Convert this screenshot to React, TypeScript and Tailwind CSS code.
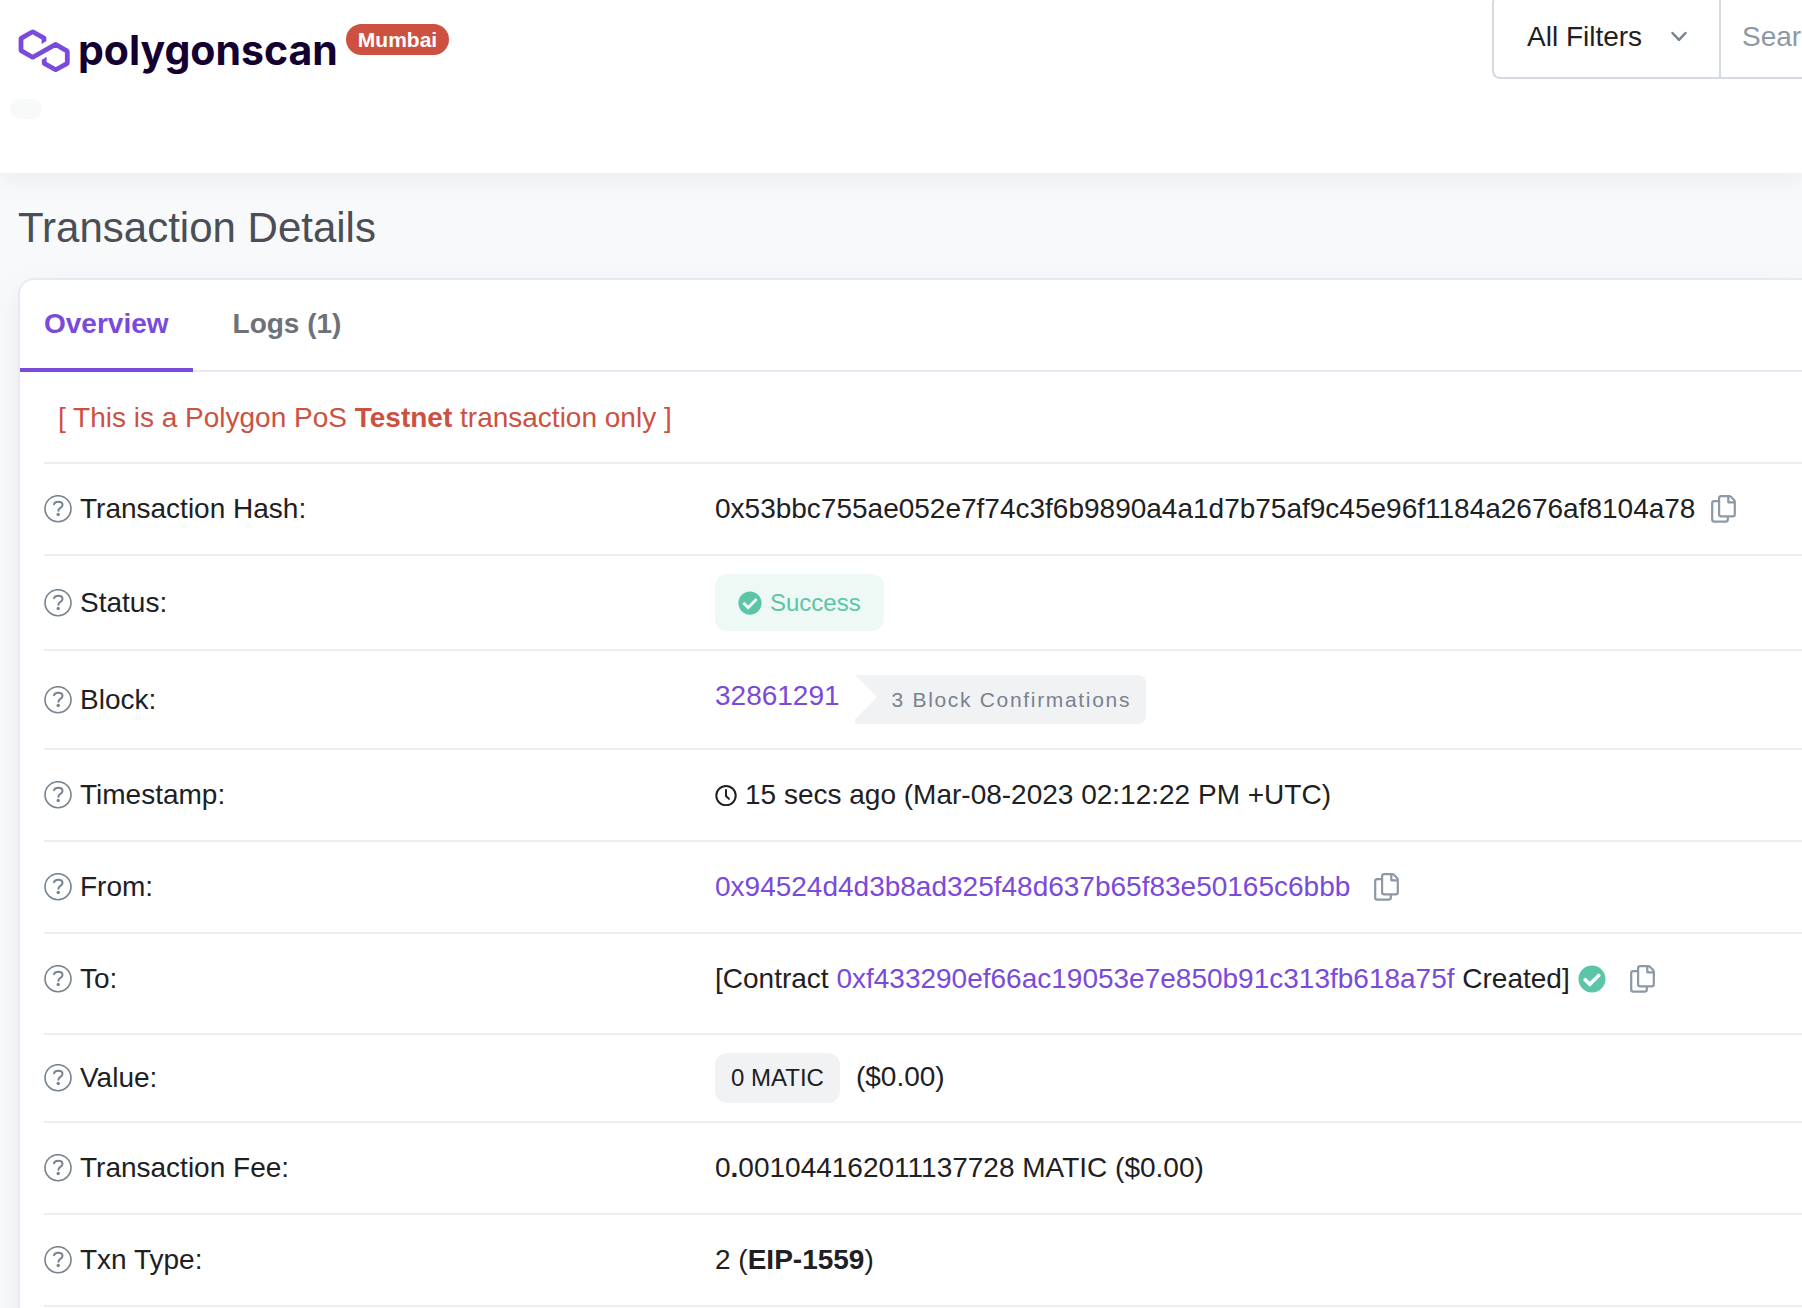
import { type ReactNode, useState } from "react";
import { FaCheckCircle } from "react-icons/fa";

type DetailRowProps = {
  label: string;
  children: ReactNode;
  className?: string;
};

function LogoMark() {
  return (
    <svg viewBox="0 0 52 44" className="h-[44px] w-[52px] shrink-0" fill="none" aria-hidden="true">
      <path
        d="M26 13V10.2L15.2 4Q14.7 3.7 14.2 4L3.5 10.1Q3 10.4 3 11V22Q3 22.6 3.5 22.9L14.2 29Q14.7 29.3 15.2 29L37.2 16.7Q37.7 16.4 38.2 16.7L48.8 22.9Q49.3 23.2 49.3 23.8V34.7Q49.3 35.3 48.8 35.6L38.2 41.5Q37.7 41.8 37.2 41.5L26.2 35.3V31.8"
        stroke="#7a4adb"
        strokeWidth="4.8"
        strokeLinejoin="round"
      />
      <path d="M23.6 12.9H28.4L23.6 16.1ZM23.8 31.9V32L28.6 28.8V31.9Z" fill="#7a4adb" />
    </svg>
  );
}

function HelpIcon() {
  return (
    <svg viewBox="0 0 28 28" className="h-7 w-7 shrink-0" fill="none" stroke="#77838f" aria-hidden="true">
      <circle cx="14" cy="13.7" r="13" strokeWidth="1.6" />
      <path d="M10 9.2C10.6 7.4 12 6.8 14.2 6.8c2.6 0 4.3 1.1 4.3 3.2 0 2.9-4.1 2.9-4.1 5.7" strokeWidth="2" strokeLinecap="round" />
      <circle cx="14.2" cy="19.5" r="1.7" fill="#77838f" stroke="none" />
    </svg>
  );
}

function CopyButton() {
  return (
    <button type="button" aria-label="Copy to clipboard" className="h-7 w-[25px] shrink-0 cursor-pointer">
      <svg viewBox="0 0 25 28" className="h-7 w-[25px]" fill="none" stroke="#8c98a4" strokeWidth="2.2" strokeLinejoin="round">
        <path d="M8 6.2H3.3Q1.2 6.2 1.2 8.3V24.6Q1.2 26.7 3.3 26.7H14.7Q16.8 26.7 16.8 24.6V21.8" />
        <path d="M10.2 1.1H18.2Q19.2 1.1 19.9 1.8L23.1 5Q23.8 5.7 23.8 6.7V19.3Q23.8 21.4 21.7 21.4H10.2Q8.1 21.4 8.1 19.3V3.2Q8.1 1.1 10.2 1.1Z" />
        <path d="M17.3 1.4V7.3H23.4" />
      </svg>
    </button>
  );
}

function ClockIcon() {
  return (
    <svg viewBox="0 0 22 22" className="h-[22px] w-[22px] shrink-0" fill="none" stroke="#1e2022" strokeWidth="2" strokeLinecap="round" aria-hidden="true">
      <circle cx="11" cy="11.6" r="9.7" />
      <path d="M11 6.1V12L14 14.9" />
    </svg>
  );
}

function DetailRow({ label, children, className = "items-center py-6" }: DetailRowProps) {
  return (
    <div className={`flex border-b-2 border-[#ececf3] ${className}`}>
      <dt className="flex w-[671px] shrink-0 items-center gap-2">
        <HelpIcon />
        {label}
      </dt>
      <dd className="min-w-0">{children}</dd>
    </div>
  );
}

export default function App() {
  const [tab, setTab] = useState("overview");

  const tabClass = (name: string) =>
    `cursor-pointer border-b-4 px-6 pt-[23px] pb-[23px] font-bold ${
      tab === name ? "border-[#7a4adb] text-[#7a4adb]" : "border-transparent text-[#6c7278]"
    }`;

  return (
    <div className="min-h-screen overflow-hidden bg-[#f8f9fb] font-['Liberation_Sans',Arial,sans-serif] text-[28px] leading-[42px] text-[#1e2022]">
      {/* HEADER */}
      <header className="relative h-[173px] bg-white shadow-[0_6px_24px_rgba(120,130,140,0.11)]">
        <div className="flex items-start justify-between">
          <a href="#" className="flex pt-6 pl-[18px]">
            <span className="flex items-center gap-2 pt-1">
              <LogoMark />
              <span className="font-['Inter',sans-serif] text-[41px] leading-[44px] font-bold text-[#130030]">polygonscan</span>
            </span>
            <span className="ml-2 h-[31px] rounded-full bg-[#cd5141] px-3 text-[21px] leading-[31px] font-bold text-white">Mumbai</span>
          </a>

          <form className="-mt-[5px] flex h-[84px] w-[310px] rounded-l-lg border-2 border-r-0 border-[#d5dae2]" onSubmit={(e) => e.preventDefault()}>
            <div className="relative w-[227px] shrink-0 border-r-2 border-[#d5dae2]">
              <select aria-label="Search filter" className="h-full w-full appearance-none bg-transparent pl-[33px] outline-none">
                <option>All Filters</option>
                <option>Addresses</option>
                <option>Tokens</option>
              </select>
              <svg viewBox="0 0 18 12" className="pointer-events-none absolute top-[34px] right-[31px] h-3 w-[18px]" fill="none" stroke="#77838f" strokeWidth="2.5" strokeLinecap="round" strokeLinejoin="round">
                <path d="M2.5 2L9 8.8L15.5 2" />
              </svg>
            </div>
            <input aria-label="Search" placeholder="Search" className="w-full min-w-0 pl-[21px] outline-none placeholder:text-[#8c98a4]" />
          </form>
        </div>
        <div className="mt-5 ml-[10px] h-5 w-8 rounded-full bg-[#f8fafa]" />
      </header>

      {/* TRANSACTION */}
      <main className="pt-[29px] pl-[18px]">
        <h1 className="text-[42px] leading-[52px] text-[#4a4f55]">Transaction Details</h1>

        <section className="mt-6 rounded-tl-2xl border-2 border-r-0 border-b-0 border-[#e7eaf3] bg-white pb-6 shadow-[0_12px_30px_rgba(120,130,140,0.12)]">
          <div role="tablist" className="flex gap-4 shadow-[inset_0_-2px_0_#e7eaf3]">
            <button type="button" role="tab" aria-selected={tab === "overview"} className={tabClass("overview")} onClick={() => setTab("overview")}>
              Overview
            </button>
            <button type="button" role="tab" aria-selected={tab === "logs"} className={tabClass("logs")} onClick={() => setTab("logs")}>
              Logs (1)
            </button>
          </div>

          <div className="pl-6">
            <p className="border-b-2 border-[#ececf3] pt-[25px] pb-[23px] pl-[14px] text-[#cd5141]">
              [ This is a Polygon PoS <strong>Testnet</strong> transaction only ]
            </p>

            <dl>
              <DetailRow label="Transaction Hash:">
                <div className="flex items-center gap-4">
                  0x53bbc755ae052e7f74c3f6b9890a4a1d7b75af9c45e96f1184a2676af8104a78
                  <CopyButton />
                </div>
              </DetailRow>

              <DetailRow label="Status:" className="items-center py-[18px]">
                <span className="flex h-[57px] items-center gap-2 rounded-xl bg-[#eef8f5] px-[23px] text-[24px] text-[#5cc5a7]">
                  <FaCheckCircle size={24} />
                  Success
                </span>
              </DetailRow>

              <DetailRow label="Block:">
                <div className="flex items-start gap-[15px]">
                  <a href="#" className="text-[#7a4adb]">32861291</a>
                  <span className="flex h-[49px] items-center rounded-r-lg bg-[#f1f2f4] pr-[15px] text-[21px] tracking-[0.08em] text-[#77838f]">
                    <span className="mr-[15px] h-[44px] self-start border-y-[22px] border-l-[22px] border-y-transparent border-l-white" />
                    3 Block Confirmations
                  </span>
                </div>
              </DetailRow>

              <DetailRow label="Timestamp:">
                <div className="flex items-center gap-2">
                  <ClockIcon />
                  15 secs ago (Mar-08-2023 02:12:22 PM +UTC)
                </div>
              </DetailRow>

              <DetailRow label="From:">
                <div className="flex items-center gap-6">
                  <a href="#" className="text-[#7a4adb]">0x94524d4d3b8ad325f48d637b65f83e50165c6bbb</a>
                  <CopyButton />
                </div>
              </DetailRow>

              <DetailRow label="To:" className="items-center pt-6 pb-[33px]">
                <div className="flex items-center gap-6">
                  <span className="flex items-center gap-2">
                    <span>
                      [Contract <a href="#" className="text-[#7a4adb]">0xf433290ef66ac19053e7e850b91c313fb618a75f</a> Created]
                    </span>
                    <FaCheckCircle size={28} color="#5cc5a7" />
                  </span>
                  <CopyButton />
                </div>
              </DetailRow>

              <DetailRow label="Value:" className="items-center py-[18px]">
                <div className="flex items-baseline gap-4">
                  <span className="rounded-xl bg-[#f1f2f4] px-4 text-[24px] leading-[50px]">0 MATIC</span>
                  ($0.00)
                </div>
              </DetailRow>

              <DetailRow label="Transaction Fee:">
                0<b>.</b>001044162011137728 MATIC ($0.00)
              </DetailRow>

              <DetailRow label="Txn Type:">
                2 (<strong>EIP-1559</strong>)
              </DetailRow>
            </dl>
          </div>
        </section>
      </main>
    </div>
  );
}
